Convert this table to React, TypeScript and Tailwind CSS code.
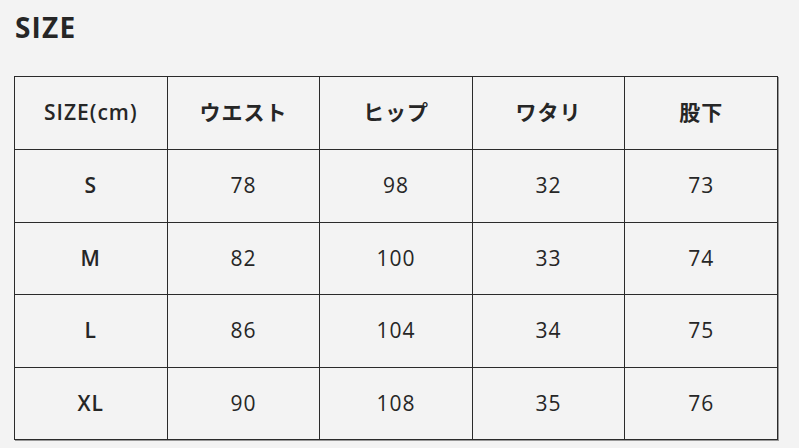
const headers = ["SIZE(cm)", "ウエスト", "ヒップ", "ワタリ", "股下"];

const rows = [
  ["S", "78", "98", "32", "73"],
  ["M", "82", "100", "33", "74"],
  ["L", "86", "104", "34", "75"],
  ["XL", "90", "108", "35", "76"],
];

const font = "font-['Open_Sans','Noto_Sans_CJK_JP',sans-serif]";

export default function App() {
  return (
    <div className={`w-[799px] h-[448px] bg-[#f3f3f3] text-[#262626] ${font} pl-[15px] pt-[8px]`}>
      <h2 className="text-[28px] font-bold leading-[38px] tracking-[1.2px]">SIZE</h2>
      {/* size table */}
      <table className="-ml-px mt-[30px] w-[764px] border-collapse table-fixed tracking-[1px] shadow-[1px_1px_0_#999]">
        <thead>
          <tr className="h-[73px]">
            {headers.map((h) => (
              <th
                key={h}
                className={`border border-[#2a2a2a] text-center text-[21px] ${
                  h === "SIZE(cm)" ? "font-semibold" : "font-bold"
                }`}
              >
                {h}
              </th>
            ))}
          </tr>
        </thead>
        <tbody>
          {rows.map((r) => (
            <tr key={r[0]} className="h-[72.5px]">
              {r.map((c, i) => (
                <td
                  key={i}
                  className={`border border-[#2a2a2a] text-center text-[21px] ${
                    i === 0 ? "font-semibold" : "font-normal"
                  }`}
                >
                  {c}
                </td>
              ))}
            </tr>
          ))}
        </tbody>
      </table>
    </div>
  );
}
